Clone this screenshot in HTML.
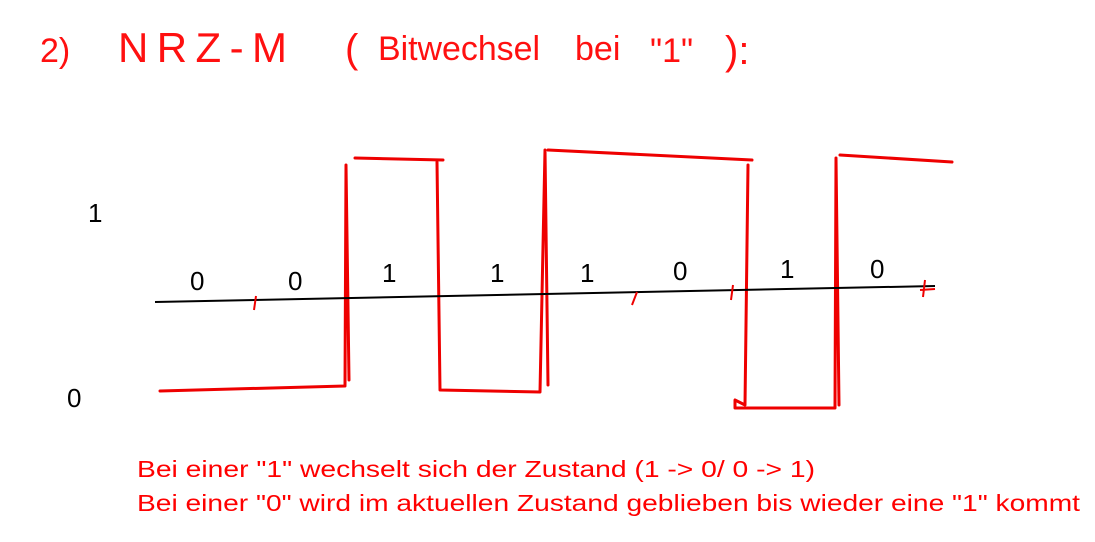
<!DOCTYPE html>
<html><head><meta charset="utf-8"><style>
html,body{margin:0;padding:0;background:#fff;width:1095px;height:542px;overflow:hidden}
svg{position:absolute;left:0;top:0}
</style></head><body>
<svg width="1095" height="542" viewBox="0 0 1095 542">
<g fill="#ff1010" font-family="Liberation Sans, sans-serif">
<text x="40" y="62" font-size="34">2)</text>
<text x="118" y="62" font-size="42" letter-spacing="6" textLength="175">NRZ-M</text>
<text x="345" y="62" font-size="40">(</text>
<text x="378" y="60" font-size="34" textLength="162" lengthAdjust="spacingAndGlyphs">Bitwechsel</text>
<text x="575" y="60" font-size="34">bei</text>
<text x="650" y="62" font-size="34">"1"</text>
<text x="725" y="64" font-size="40">):</text>
</g>
<g fill="none" stroke="#e00" stroke-width="3" stroke-linecap="round" stroke-linejoin="round">
<path d="M160 391 L345 386 L346 165 L349 380"/>
<path d="M355 158 L443 160"/>
<path d="M437 162 L440 390 L540 392 L545 150 L548 385"/>
<path d="M548 150 L752 160"/>
<path d="M748 165 L745 405 L735 400 L735 408 L835 408 L836 158 L839 405"/>
<path d="M840 155 L952 162"/>
</g>
<path d="M155 302 L935 286" stroke="#000" stroke-width="2" fill="none"/>
<g stroke="#e00" stroke-width="2" fill="none">
<path d="M256 296 L254 310 M637 292 L632 305 M733 285 L731 300 M925 280 L923 297 M920 290 L935 289"/>
</g>
<g fill="#000" font-family="Liberation Sans, sans-serif" font-size="26">
<text x="88" y="222">1</text>
<text x="67" y="407">0</text>
<text x="190" y="290">0</text>
<text x="288" y="290">0</text>
<text x="382" y="282">1</text>
<text x="490" y="282">1</text>
<text x="580" y="282">1</text>
<text x="673" y="280">0</text>
<text x="780" y="278">1</text>
<text x="870" y="278">0</text>
</g>
<g fill="#ff0000" font-family="Liberation Sans, sans-serif" font-size="23">
<text x="137" y="477" textLength="678" lengthAdjust="spacingAndGlyphs">Bei einer "1" wechselt sich der Zustand (1 -&gt; 0/ 0 -&gt; 1)</text>
<text x="137" y="511" textLength="943" lengthAdjust="spacingAndGlyphs">Bei einer "0" wird im aktuellen Zustand geblieben bis wieder eine "1" kommt</text>
</g>
</svg>
</body></html>
